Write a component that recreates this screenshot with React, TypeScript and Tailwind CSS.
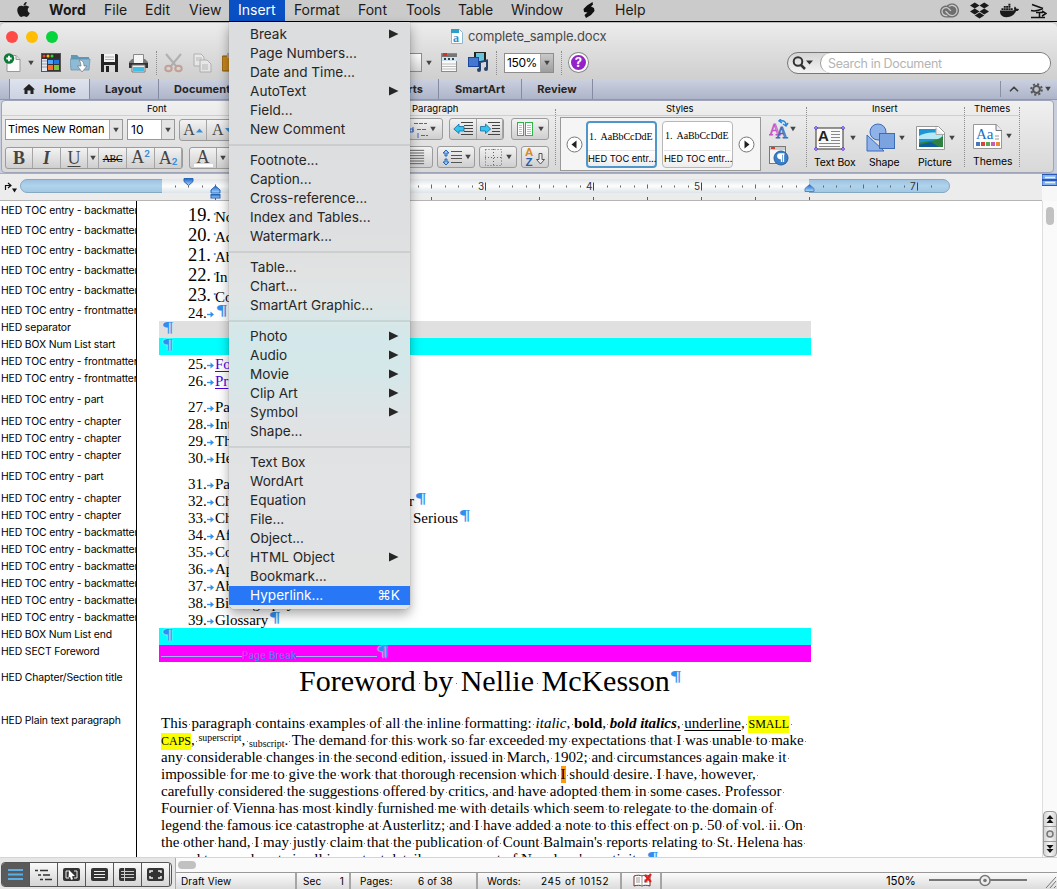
import React from "react";
import { FaApple, FaDropbox, FaDocker } from "react-icons/fa";
import { SiAdobecreativecloud } from "react-icons/si";
import { ChevronUp } from "lucide-react";

const Caret = ({ className = "" }: { className?: string }) => (
  <svg width="7" height="6" viewBox="0 0 7 6" className={`shrink-0 ${className}`}>
    <path d="M0.3 0.5h6.4L3.5 5.5z" fill="#444" />
  </svg>
);

const menuBar = [
  { t: "Word", c: "w-[55px] font-bold tracking-[0.1px]" },
  { t: "File", c: "w-[41px]" },
  { t: "Edit", c: "w-[44px]" },
  { t: "View", c: "w-[40px]" },
  { t: "Insert", c: "w-[56px] bg-[#0850c4] text-white pl-[9px]" },
  { t: "Format", c: "w-[73px] pl-[9px] tracking-[-0.1px]" },
  { t: "Font", c: "w-[48px]" },
  { t: "Tools", c: "w-[52px] tracking-[-0.2px]" },
  { t: "Table", c: "w-[53px] tracking-[-0.2px]" },
  { t: "Window", c: "w-[71px] tracking-[-0.3px]" },
];

function MenuBar() {
  return (
    <div className="flex h-[22px] shrink-0 items-stretch border-b border-black bg-[#cbcbcb] text-[14px] leading-[20px] text-[#1a1a1a]">
      <div className="flex w-[49px] items-start pt-px pl-[15px]">
        <FaApple size={17} />
      </div>
      {menuBar.map((m) => (
        <div key={m.t} className={`shrink-0 ${m.c}`}>{m.t}</div>
      ))}
      <svg width="33" height="21" viewBox="0 0 33 21" className="shrink-0">
        <path d="M10.500 2L5 5.500 1.500 9l.5 3 3.500.5L2.500 15l1.500 3 5-3 3.500-4-.5-3-3-1.500 2-2z" fill="#111" />
      </svg>
      <div className="shrink-0">Help</div>
      <div className="ml-auto flex items-center gap-[11px] pr-[10px]">
        <SiAdobecreativecloud size={19} color="#6e6e6e" />
        <FaDropbox size={19} />
        <FaDocker size={19} />
        <svg width="17" height="17" viewBox="0 0 17 17" fill="none" stroke="#111" strokeWidth="1.500">
          <path d="M2 2.500l11 4M1 8.500c4 1 8 0 12-2M1 15.500h14M6 10.500h7M9.500 10.500v5M12 9l4 2.500-4 2.500" />
        </svg>
      </div>
    </div>
  );
}

function TitleBar() {
  return (
    <div className="flex h-[23px] shrink-0 items-center pl-[6px]">
      <div className="flex gap-[8px]">
        <i className="size-[12px] rounded-full bg-[#ff4a48]" />
        <i className="size-[12px] rounded-full bg-[#ffbd04]" />
        <i className="size-[12px] rounded-full bg-[#07d33c]" />
      </div>
      <svg width="12" height="15" viewBox="0 0 12 15" className="ml-[393px]">
        <path d="M.5 .5h8l3 3v11H.5z" fill="#fff" stroke="#8db7cc" />
        <path d="M0 0h8v4H0z" fill="#2e9fc6" />
        <text x="2" y="13" fontSize="12" fontWeight="bold" fontFamily="Liberation Serif, serif" fill="#2993c9">a</text>
      </svg>
      <span className="ml-[5px] text-[13px] tracking-[-0.12px] text-[#4a4a4a]">complete_sample.docx</span>
    </div>
  );
}

const Dotted = ({ className = "" }: { className?: string }) => (
  <i className={`shrink-0 border-l border-dotted border-[#8d8d8d] ${className}`} />
);

function Toolbar() {
  return (
    <div className="flex h-[32px] shrink-0 items-center border-b border-[#a3a3a3] pb-[2px] pl-[3px]">
      <svg width="20" height="20" viewBox="0 0 20 20">
        <path d="M4 2.500h9l4 4v12H4z" fill="#fbfbfb" stroke="#999" />
        <path d="M13 2.500v4h4" fill="#ddd" stroke="#999" />
        <circle cx="6" cy="5.500" r="5.200" fill="#0b7a37" />
        <path d="M6 2.800v5.400M3.300 5.500h5.400" stroke="#fff" strokeWidth="1.800" />
      </svg>
      <Caret className="ml-[5px] w-[6px]" />
      <svg width="21" height="20" viewBox="0 0 21 20" className="ml-[7px]">
        <rect x=".5" y=".5" width="19" height="18" fill="#333" stroke="#555" />
        <rect x="1" y="1" width="18" height="4" fill="#2f2c2b" />
        <circle cx="3" cy="3" r="1.500" fill="#f33" /><circle cx="7" cy="3" r="1.500" fill="#fb0" /><circle cx="11" cy="3" r="1.500" fill="#2d4" />
        <rect x="1" y="6" width="5" height="12" fill="#e4e8ee" />
        <path d="M1 8h5M1 11h5M1 14h5" stroke="#99a" />
        <rect x="7" y="7" width="5" height="4" fill="#4ba5ff" /><rect x="13" y="7" width="5" height="4" fill="#2774dd" />
        <rect x="7" y="12" width="5" height="5" fill="#ff6c2b" /><rect x="13" y="12" width="5" height="5" fill="#7cc43c" />
      </svg>
      <svg width="21" height="20" viewBox="0 0 21 20" className="ml-[8px]">
        <path d="M1 2h6l2 2h10v12H1z" fill="#5f97b7" />
        <path d="M0 6h20l-1 11H1z" fill="#8ebbd3" stroke="#5e91ae" strokeWidth=".7" />
        <path d="M9 7c4 0 5 3 5 6h3l-5 6-4.500-6H11c0-2-.5-4-2-6z" fill="#fff" stroke="#667" strokeWidth=".6" />
      </svg>
      <svg width="19" height="20" viewBox="0 0 19 20" className="ml-[9px]">
        <path d="M1 1h16l1 1v17H1z" fill="#252525" />
        <rect x="4" y="1" width="11" height="8" fill="#f4f4f4" /><path d="M5 4h9M5 6.500h9" stroke="#aaa" />
        <rect x="4" y="12" width="11" height="7" fill="#d9d9d9" /><rect x="6" y="13" width="3" height="6" fill="#222" />
      </svg>
      <svg width="21" height="20" viewBox="0 0 21 20" className="ml-[9px]">
        <path d="M5.500 1.500h10v9h-10z" fill="#f5f5f5" stroke="#888" />
        <path d="M1 9l3-3h1.500v4h10V6H17l3 3v6H1z" fill="#777" /><path d="M1 10h19v5H1z" fill="#333" />
        <path d="M4 12h13v7H4z" fill="#eee" stroke="#777" /><path d="M5 14h11v4H5z" fill="#3dbfe8" />
      </svg>
      <Dotted className="ml-[7px] h-[24px]" />
      <svg width="20" height="20" viewBox="0 0 20 20" className="ml-[7px] opacity-50">
        <path d="M2 1l10 12M17 1L7 13" stroke="#888" strokeWidth="2" />
        <ellipse cx="4.500" cy="15.500" rx="3.200" ry="2.800" fill="none" stroke="#b56c58" strokeWidth="2" />
        <ellipse cx="14.500" cy="15.500" rx="3.200" ry="2.800" fill="none" stroke="#b56c58" strokeWidth="2" />
      </svg>
      <svg width="19" height="20" viewBox="0 0 19 20" className="ml-[9px] opacity-50">
        <path d="M1 1h7l3 3v9H1z" fill="#f5f5f5" stroke="#888" /><path d="M3 5h6M3 7h6" stroke="#999" />
        <path d="M7 7h7l4 4v8H7z" fill="#f5f5f5" stroke="#888" /><path d="M9 12h6M9 14h6M9 16h6" stroke="#999" />
      </svg>
      <svg width="10" height="20" viewBox="0 0 10 20" className="ml-[10px]">
        <rect y="3" width="10" height="15" rx="1" fill="#c5851c" stroke="#80530f" /><rect x="5" width="5" height="5" fill="#aaa" />
      </svg>
      <i className="ml-[174px] h-[19px] w-[16px] border border-[#8b8b8b] bg-gradient-to-b from-white to-[#d8d8d8]" />
      <Caret className="ml-[4px] w-[6px]" />
      <svg width="17" height="20" viewBox="0 0 17 20" className="ml-[9px]">
        <rect x=".5" y=".5" width="15" height="18" fill="#fafafa" stroke="#8b8b8b" />
        <rect x="1" y="1" width="15" height="3" fill="#777" /><path d="M2 0h4v3H2z" fill="#d4341d" />
        <path d="M1 4h15v4H1z" fill="#cfe2f2" /><path d="M3 6h2M7 6h2M11 6h2" stroke="#344" strokeWidth="2" />
        <path d="M1 11h14M1 13.500h14M1 16h14" stroke="#bbb" />
      </svg>
      <svg width="21" height="21" viewBox="0 0 21 21" className="ml-[10px]">
        <rect x="6" y="0" width="12" height="10" fill="#222" /><rect x="8" y="1" width="8" height="8" fill="#65c5dc" />
        <rect x=".5" y="5.500" width="10" height="9" fill="#4477cf" stroke="#1c469d" />
        <path d="M12 18v-8l7-1.500v8" stroke="#27416d" strokeWidth="2" fill="none" />
        <circle cx="11" cy="18" r="2" fill="#27416d" /><circle cx="18" cy="17" r="2" fill="#27416d" />
      </svg>
      <Dotted className="ml-[7px] h-[24px]" />
      <div className="ml-[7px] flex h-[20px] w-[50px] border border-[#8d8d8d] bg-white text-[12px] leading-[18px] text-black">
        <span className="w-[35px] pl-[2px] tracking-[-0.4px]">150%</span>
        <span className="flex grow items-center justify-center border-l border-[#aaa] bg-gradient-to-b from-[#c9c9c9] to-[#9e9e9e]">
          <Caret className="w-[6px]" />
        </span>
      </div>
      <Dotted className="ml-[7px] h-[24px]" />
      <span className="ml-[7px] flex size-[19px] items-center justify-center rounded-full border-2 border-white bg-[#9323c8] text-[13px] font-bold text-white shadow-[0_0_0_1px_#888]">?</span>
      <div className="mr-[6px] ml-auto flex h-[22px] w-[264px] rounded-full border border-[#777] bg-gradient-to-b from-[#d5d5d5] to-[#f3f3f3]">
        <svg width="32" height="20" viewBox="0 0 32 20">
          <circle cx="10" cy="8.500" r="4.300" fill="none" stroke="#333" strokeWidth="2" />
          <path d="M13 12l4 4" stroke="#333" strokeWidth="2.500" /><path d="M18 7.500h7l-3.500 4z" fill="#333" />
        </svg>
        <div className="grow rounded-full border-l border-[#999] bg-white pl-[7px] text-[12.5px] leading-[21px] tracking-[-0.33px] text-[#b4b4b4]">Search in Document</div>
      </div>
    </div>
  );
}

function Tabs() {
  const base = "shrink-0 border-r border-[#858ba0] leading-[20px]";
  return (
    <div className="flex h-[21px] shrink-0 border-b border-[#8f96b4] bg-gradient-to-b from-[#ccd1df] to-[#aeb5ca] text-[11px] font-bold tracking-[0.1px] text-[#262626]">
      <i className={`w-[10px] ${base}`} />
      <div className={`flex w-[80px] items-center bg-gradient-to-b from-[#dfe3ee] to-[#ccd2e2] pl-[13px] ${base}`}>
        <svg width="12" height="10" viewBox="0 0 12 10"><path d="M6 0l6 5.500h-1.500V10h-3V6.500h-3V10h-3V5.500H0z" fill="#222" /></svg>
        <span className="ml-[9px]">Home</span>
      </div>
      <div className={`w-[69px] pl-[15px] ${base}`}>Layout</div>
      <div className={`w-[171px] pl-[15px] ${base}`}>Document</div>
      <div className={`w-[109px] pr-[15px] text-right ${base}`}>Charts</div>
      <div className={`w-[83px] text-center ${base}`}>SmartArt</div>
      <div className={`w-[71px] text-center ${base}`}>Review</div>
      <div className="my-[2px] ml-auto flex w-[57px] items-center border-l border-[#8a90a3] pl-[6px] text-[#444]">
        <ChevronUp size={14} strokeWidth={3} />
        <svg width="13" height="13" viewBox="0 0 13 13" className="ml-[9px]"><circle cx="6.500" cy="6.500" r="5.300" fill="none" stroke="#555" strokeWidth="2" strokeDasharray="2.080 2.080" /><circle cx="6.500" cy="6.500" r="3.400" fill="none" stroke="#555" strokeWidth="2" /></svg>
        <Caret className="ml-[2px] w-[6px]" />
      </div>
    </div>
  );
}

const Btn = ({ className = "", children }: { className?: string; children?: React.ReactNode }) => (
  <div className={`flex h-[22px] shrink-0 items-center justify-center rounded-[3px] border border-[#9b9b9b] bg-gradient-to-b from-[#f3f3f3] to-[#cfcfcf] ${className}`}>{children}</div>
);
const Cell = ({ className = "", children }: { className?: string; children?: React.ReactNode }) => (
  <span className={`flex h-full shrink-0 items-center justify-center border-r border-[#a5a5a5] ${className}`}>{children}</span>
);
const Lines = ({ w = 18, n = 5, className = "" }: { w?: number; n?: number; className?: string }) => (
  <svg width={w} height={n * 3} viewBox={`0 0 ${w} ${n * 3}`} className={className}>
    {Array.from({ length: n }, (_, i) => <path key={i} d={`M0 ${i * 3 + 1.5}h${w}`} stroke="#555" />)}
  </svg>
);
const Head = ({ className = "", children }: { className?: string; children: React.ReactNode }) => (
  <div className={`h-[14px] border-b border-[#cfcfcf] text-[9.5px] leading-[14px] ${className}`}>{children}</div>
);

const Card = ({ active = false }: { active?: boolean }) => (
  <div className={`flex h-[47px] w-[71px] flex-col rounded-[4px] bg-gradient-to-b from-white from-70% to-[#ececec] whitespace-pre text-black ${active ? "border-2 border-[#4f97cb]" : "border border-[#b8b8b8] px-px"}`}>
    <div className="h-[29px] border-b border-[#e5e5e5] pt-[6px] pl-px font-['Liberation_Serif',serif] text-[10px] leading-[16px] tracking-[-0.1px]">{"1.  AaBbCcDdE"}</div>
    <div className="text-[9.3px] leading-[15px] tracking-[-0.04px]">HED TOC entr...</div>
  </div>
);

const Arrow = ({ left = false }: { left?: boolean }) => (
  <svg width="17" height="17" viewBox="0 0 17 17" className="shrink-0">
    <circle cx="8.500" cy="8.500" r="7.500" fill="#fff" stroke="#777" />
    <path d={left ? "M10.5 4.500v8L5.500 8.500z" : "M6.500 4.500v8l5-4z"} fill="#222" />
  </svg>
);

function Ribbon() {
  const serif = "font-['Liberation_Serif',serif] text-[#444]";
  return (
    <div className="shrink-0 bg-[#c9cedd] pr-[3px] pl-px">
      <div className="flex h-[73px] rounded-[4px] border border-[#9fa5b8] bg-gradient-to-b from-[#f0f0f0] to-[#d8d8d8] pt-px text-black">
        <div className="w-[398px] shrink-0 overflow-hidden">
          <Head className="pl-[145px]">Font</Head>
          <div className="flex pt-[3px] pl-[3px]">
            <div className="flex h-[21px] w-[118px] border border-[#999] bg-white text-[11px] leading-[19px]">
              <span className="w-[99px] shrink-0 pl-[2px] tracking-[-0.05px] whitespace-nowrap">Times New Roman</span>
              <span className="ml-[4px] flex grow items-center justify-center border-l border-[#aaa] bg-[#e4e4e4]"><Caret className="w-[6px]" /></span>
            </div>
            <div className="ml-[4px] flex h-[21px] w-[48px] border border-[#999] bg-white text-[12px] leading-[19px]">
              <span className="w-[33px] pl-[3px]">10</span>
              <span className="flex grow items-center justify-center border-l border-[#aaa] bg-[#e4e4e4]"><Caret className="w-[6px]" /></span>
            </div>
            <Btn className={`ml-[4px] w-[60px] text-[16px] ${serif}`}>
              <Cell className="w-[27px]">A<svg width="7" height="5" className="ml-px"><path d="M0 4.500h7L3.500 .5z" fill="#3a8fd6" /></svg></Cell>
              <Cell className="w-[31px] justify-start border-0 pl-[5px]">A<svg width="7" height="5" className="ml-px"><path d="M0 0h7L3.500 4z" fill="#3a8fd6" /></svg></Cell>
            </Btn>
          </div>
          <div className="flex pt-[6px] pl-[3px]">
            <Btn className={`w-[178px] text-[18px] ${serif}`}>
              <Cell className="w-[27px] font-bold">B</Cell>
              <Cell className="w-[28px] font-bold italic">I</Cell>
              <Cell className="w-[27px] underline underline-offset-2">U</Cell>
              <Cell className="w-[11px]"><Caret className="w-[6px]" /></Cell>
              <Cell className="w-[28px] text-[10px] tracking-[-0.3px] text-black line-through">ABC</Cell>
              <Cell className="w-[28px] pb-px">A<span className="mb-[8px] font-['Inter',sans-serif] text-[9px] font-bold text-[#3a8fd6]">2</span></Cell>
              <Cell className="w-[27px] border-0">A<span className="mt-[8px] font-['Inter',sans-serif] text-[9px] font-bold text-[#3a8fd6]">2</span></Cell>
            </Btn>
            <Btn className={`ml-[6px] w-[60px] text-[18px] ${serif}`}>
              <Cell className="w-[27px]"><span className="h-[18px] border-b-[3px] border-white px-[3px] leading-[16px]">A</span></Cell>
              <Cell className="w-[31px] justify-start border-0 pl-[3px]"><Caret className="w-[6px]" /></Cell>
            </Btn>
          </div>
        </div>
        <div className="w-[155px] shrink-0">
          <Head className="pl-[12px]">Paragraph</Head>
          <div className="flex pt-[2px]">
            <Btn className="w-[43px]">
              <svg width="20" height="17" viewBox="0 0 20 17"><path d="M6 2.500h13M9 8.500h10M13 14.500h7" stroke="#666" strokeDasharray="4 1" /><path d="M1 0v4M5 6v5M2 8h3v3H2zM10 12v5" stroke="#36c" fill="none" /></svg>
              <Caret className="ml-[2px] w-[6px]" />
            </Btn>
            <Btn className="ml-[6px] w-[55px]">
              <Cell className="w-[27px]"><svg width="20" height="14" viewBox="0 0 20 14"><path d="M8 .5h12M11 3.500h9M11 6.500h9M11 9.500h9M8 12.500h12" stroke="#444" /><path d="M6 2v2.500h5v4.500H6v2.500L.8 7z" fill="#35c3f0" stroke="#146c9e" strokeWidth=".8" /></svg></Cell>
              <Cell className="w-[26px] border-0"><svg width="20" height="14" viewBox="0 0 20 14"><path d="M8 .5h12M12 3.500h8M12 6.500h8M12 9.500h8M8 12.500h12" stroke="#444" /><path d="M5.500 2v2.500h-5v4.500h5v2.500L10.700 7z" fill="#35c3f0" stroke="#146c9e" strokeWidth=".8" /></svg></Cell>
            </Btn>
            <Btn className="ml-[7px] w-[38px]">
              <svg width="18" height="16" viewBox="0 0 18 16"><rect x="1.500" y="1.500" width="6" height="13" fill="#fff" stroke="#2db44b" /><rect x="9.500" y="1.500" width="7" height="13" fill="#fff" stroke="#2db44b" /><path d="M3 4.500h3M3 6.500h3M3 8.500h3M3 10.500h3M3 12.500h3M11 4.500h4M11 6.500h4M11 8.500h4M11 10.500h4M11 12.500h4" stroke="#bbb" /></svg>
              <Caret className="ml-[4px] w-[6px]" />
            </Btn>
          </div>
          <div className="flex pt-[6px]">
            <Btn className="w-[33px] pl-px"><Lines n={6} w={16} className="h-[16px]" /></Btn>
            <Btn className="ml-[4px] w-[38px]">
              <svg width="20" height="17" viewBox="0 0 20 17"><path d="M9 2.500h11M9 6.500h11M9 9.500h11M9 13.500h11" stroke="#555" /><path d="M1 4l3-3 3 3H5v3H3V4zM1 13l3 3 3-3H5v-3H3v3z" fill="#8ec7f3" stroke="#2766bd" /></svg>
              <Caret className="ml-[3px] w-[6px]" />
            </Btn>
            <Btn className="ml-[4px] w-[38px]">
              <svg width="17" height="17" viewBox="0 0 17 17"><path d="M.5 .5h16v16H.5zM8.500 0v17M0 8.500h17" fill="none" stroke="#666" strokeDasharray="1 2" /></svg>
              <Caret className="ml-[4px] w-[6px]" />
            </Btn>
            <Btn className="ml-[4px] w-[28px]">
              <svg width="22" height="20" viewBox="0 0 22 20" fontFamily="Liberation Sans, sans-serif" fontWeight="bold" fontSize="11.500"><text x="1" y="9" fill="#d98a1c">A</text><text x="1.500" y="19" fill="#245cae">Z</text><path d="M15 6.500v6h-2.500l4 4.500 4-4.500H18v-6z" fill="#eee" stroke="#555" /></svg>
            </Btn>
          </div>
        </div>
        <Dotted className="my-[7px]" />
        <div className="w-[250px] shrink-0">
          <Head className="pl-[110px]">Styles</Head>
          <div className="flex pt-px pl-[4px]">
            <div className="flex h-[54px] w-[201px] items-center justify-center gap-[5px] border border-[#999] bg-[#f5f5f5]">
              <Arrow left /><div className="ml-[-2px] flex gap-[5px]"><Card active /><Card /></div><Arrow />
            </div>
            <div className="flex flex-col gap-[7px] pt-[2px] pl-[8px]">
              <div className="flex items-center">
                <svg width="20" height="20" viewBox="0 0 20 20" fontFamily="Liberation Serif, serif"><text x="0" y="16" fontSize="16" fill="#fff" stroke="#c457c9">A</text><text x="7" y="19" fontSize="16" fill="#8db8f0" stroke="#466eb4">A</text><path d="M11 2c4-1 6 1 6 4M14 5l3 2 2-3M12 0l-2 2 3 2" fill="none" stroke="#2786df" strokeWidth="1.500" /></svg>
                <Caret className="ml-px w-[6px]" />
              </div>
              <svg width="20" height="20" viewBox="0 0 20 20"><rect x=".5" y=".5" width="16" height="17" fill="#f4f4f4" stroke="#777" /><path d="M1 1h15v3H1z" fill="#ccc" /><path d="M2 1h4v2H2z" fill="#e13b22" /><circle cx="12" cy="12" r="7" fill="#387fc8" stroke="#2860a5" /><path d="M15.500 8H11a2 2 0 000 4.500h1V8M12.500 8v8M14.500 8v8" stroke="#fff" strokeWidth="1.300" fill="#fff" /></svg>
            </div>
          </div>
        </div>
        <Dotted className="my-[5px]" />
        <div className="w-[157px] shrink-0 text-[10.4px] tracking-[-0.1px]">
          <Head className="pl-[65px] tracking-normal">Insert</Head>
          <div className="flex pt-[7px] pl-[7px]">
            <div className="w-[52px]">
              <div className="flex h-[30px] items-center">
                <svg width="32" height="25" viewBox="0 0 32 25"><rect x="2" y="2" width="27" height="21" fill="#f8f8f8" stroke="#333" /><text x="4" y="15" fontSize="15" fontWeight="bold" fontFamily="Liberation Sans, sans-serif" fill="#222">A</text><path d="M17 5.500h9M17 8.500h9M17 11.500h9M17 14.500h9M5 17.500h21M5 20.500h21" stroke="#888" /><g fill="#fff" stroke="#4b1fe0"><circle cx="2" cy="2" r="1.300" /><circle cx="29" cy="2" r="1.300" /><circle cx="2" cy="23" r="1.300" /><circle cx="29" cy="23" r="1.300" /></g></svg>
                <Caret className="ml-[4px] w-[6px]" />
              </div>
              <div className="mt-[3px] leading-[14px] whitespace-nowrap">Text Box</div>
            </div>
            <div className="w-[50px]">
              <div className="flex h-[30px] items-center">
                <svg width="30" height="30" viewBox="0 0 30 30"><g stroke="#3c6bb8" fill="#8fb2e8"><circle cx="12" cy="9" r="8" /><path d="M1 12v16h17z" /><rect x="13.500" y="10.500" width="15" height="15" fill="#7ba3e0" /></g></svg>
                <Caret className="ml-[3px] w-[6px]" />
              </div>
              <div className="mt-[3px] pl-[3px] leading-[14px]">Shape</div>
            </div>
            <div className="w-[46px]">
              <div className="flex h-[30px] items-center">
                <svg width="30" height="25" viewBox="0 0 30 25"><path d="M.5 .5h22l6 6v17H.5z" fill="#fff" stroke="#999" /><path d="M3 3h17l7 6v12H3z" fill="#2194d4" /><path d="M3 10c6-3 13-5 23-2l1 5H3z" fill="#b6e9f6" /><path d="M3 17c7-3 15 0 24-7v11H3z" fill="#2e8241" /><path d="M3 19l12-3 8 5H3z" fill="#0d5c9c" /><path d="M20 1.500v7h8" fill="#eee" stroke="#aaa" /></svg>
                <Caret className="ml-[3px] w-[6px]" />
              </div>
              <div className="mt-[3px] pl-[2px] leading-[14px]">Picture</div>
            </div>
          </div>
        </div>
        <Dotted className="my-[5px]" />
        <div className="w-[54px] shrink-0 text-[10.4px]">
          <Head className="pl-[9px]">Themes</Head>
          <div className="flex h-[26px] items-start pt-[8px] pl-[8px]">
            <svg width="30" height="26" viewBox="0 0 30 26" className="shrink-0"><path d="M.5 .5h23l5 6v18H.5z" fill="#fff" stroke="#999" /><path d="M23 .5v6h6" fill="#eee" stroke="#777" /><text x="3" y="15" fontSize="15" fontFamily="Liberation Serif, serif" fill="#236fc0">Aa</text><path d="M22 12h4M22 15h4" stroke="#999" />{["#4776ba", "#d9443b", "#56a74d", "#c45fb1", "#ec8b2e"].map((c, i) => <rect key={c} x={3 + i * 5} y="18" width="4" height="4" fill={c} />)}</svg>
            <Caret className="mt-[9px] ml-[3px] w-[6px]" />
          </div>
          <div className="mt-[13px] pl-[8px] leading-[14px]">Themes</div>
        </div>
        <Dotted className="my-[5px]" />
      </div>
    </div>
  );
}

function Ruler() {
  const ticks = Array.from({ length: 57 }, (_, i) => i + 1).filter((i) => i !== 48);
  return (
    <div className="flex h-[28px] shrink-0 border-t border-[#a9afbf] bg-[#ececec]">
      <svg width="1042" height="27" viewBox="0 0 1042 27" className="shrink-0" fontFamily="Inter, sans-serif">
        <defs>
          <linearGradient id="rb" x2="0" y2="1"><stop stopColor="#9dc2df" /><stop offset=".5" stopColor="#b1d3ec" /><stop offset="1" stopColor="#a0c7e4" /></linearGradient>
          <linearGradient id="rw" x2="0" y2="1"><stop stopColor="#dfe4e8" /><stop offset=".5" stopColor="#fdfdfd" /><stop offset="1" stopColor="#dde4e9" /></linearGradient>
          <linearGradient id="mk" x2="0" y2="1"><stop stopColor="#1f60c8" /><stop offset="1" stopColor="#a9dcff" /></linearGradient>
        </defs>
        <rect x="20.500" y="5.500" width="929" height="13" rx="6.500" fill="url(#rb)" stroke="#86a9c2" />
        <rect x="162" y="5" width="647" height="14" fill="url(#rw)" />
        {ticks.map((i) => {
          const x = Math.round(162 + i * 13.5) - 0.5;
          if (i % 8 === 0) return <g key={i}><path d={`M${x} 8.500v8`} stroke="#444" /><text x={x - 7.5} y="16" fontSize="10" fill="#333">{i / 8}</text></g>;
          return <path key={i} d={i % 4 === 0 ? `M${x} 10.500v4` : `M${x} 11.500v2`} stroke="#666" />;
        })}
        {Array.from({ length: 12 }, (_, i) => <path key={i} d={`M${215.5 + i * 54} 23v3`} stroke="#4d6277" />)}
        <path d="M0 26.500h1042" stroke="#b5b5b5" />
        <path d="M5.500 16V11.500h5M8 9l3 2.500-3 2.500" stroke="#111" fill="none" strokeWidth="1.200" /><path d="M12 14.500h5l-2.500 4z" fill="#111" />
        <path d="M184 4.500h9v3l-4.500 4-4.500-4z" fill="url(#mk)" stroke="#2864b5" />
        <path d="M211 19v-3l4.500-4 4.500 4v3z" fill="url(#mk)" stroke="#2864b5" /><rect x="211" y="20.500" width="9" height="3.500" fill="url(#mk)" stroke="#2864b5" />
        <path d="M805 17.500v-3l4.500-4 4.500 4v3z" fill="url(#mk)" stroke="#5587bd" />
      </svg>
      <svg width="15" height="27" viewBox="0 0 15 27"><path d="M0 0h15v27H0z" fill="#f7f7f7" /><path d="M0 .5h15v5H0zM0 6.500h15v5H0z" fill="#7fb0f0" stroke="#2959b5" /><path d="M3 3.500h10M3 8.500h10" stroke="#e7f2ff" strokeWidth="1.500" /></svg>
    </div>
  );
}

/* Spaces carry a faint centre dot, as with formatting marks switched on. */
const D = ({ children }: { children: string }) => (
  <>
    {children.split(/( )/).map((p, i) =>
      p === " " ? (
        <span key={i} className="bg-[linear-gradient(#777,#777)] bg-[length:1px_1px] bg-[position:50%_60%] bg-no-repeat"> </span>
      ) : (
        p
      ),
    )}
  </>
);

const Pil = ({ className = "" }: { className?: string }) => (
  <span className={`inline-block w-[11px] origin-left scale-x-[1.45] text-[15px] leading-[13px] text-[#2f8ff0] [-webkit-text-stroke:0.2px_#2f8ff0] ${className}`}>¶</span>
);

const Entry = ({ n, children, tail = false }: { n: number; children?: React.ReactNode; tail?: boolean }) => (
  <div className="flex h-[17px] pl-[29px] text-[15px] leading-[19px]">
    <span className="w-[19px] shrink-0">{n}.</span>
    <svg width="8" height="19" viewBox="0 0 8 19" className="shrink-0"><path d="M0 10.500h5" stroke="#2f8ff0" strokeWidth="1.300" /><path d="M3.500 7.500l3.500 3-3.500 3z" fill="#2f8ff0" /></svg>
    <span className="whitespace-nowrap">{children}</span>
    {tail && <Pil className="ml-[2px]" />}
  </div>
);

const Big = ({ n, children }: { n: number; children: string }) => (
  <div className="flex pl-[29px] leading-[20px]">
    <span className="w-[24px] shrink-0 text-[18.5px] tracking-[-0.1px]">{n}.</span>
    <span className="w-[3px] text-[#2f8ff0]">·</span>
    <span className="pt-[2px] text-[15px]">{children}</span>
  </div>
);

const L = ({ children }: { children: React.ReactNode }) => <div className="h-[17px] leading-[17px] whitespace-pre">{children}</div>;

const bm = "HED TOC entry - backmatter";
const fm = "HED TOC entry - frontmatter";
const ch = "HED TOC entry - chapter";
const pt = "HED TOC entry - part";

type Row = { l: string; h: string; lp: string; cp: string; c: React.ReactNode };
const big = (n: number, t: string): Row => ({ l: bm, h: "h-[20px]", lp: "pt-[3px]", cp: "pt-[4px]", c: <Big n={n}>{t}</Big> });
const row = (l: string, c: React.ReactNode): Row => ({ l, h: "h-[17px]", lp: "", cp: "", c });
const part = (c: React.ReactNode): Row => ({ l: pt, h: "h-[26px]", lp: "pt-[4px]", cp: "pt-[9px]", c });
const Bar = ({ className }: { className: string }) => (
  <div className={`flex h-[17px] w-[652px] pl-[4px] ${className}`}><Pil className="[text-shadow:0_0_1px_#fff,0_0_1px_#fff]" /></div>
);

const rows: Row[] = [
  big(19, "No"), big(20, "Ac"), big(21, "Ab"), big(22, "In"), big(23, "Co"),
  { l: fm, h: "h-[20px]", lp: "pt-[3px]", cp: "pt-[3px]", c: <Entry n={24} tail /> },
  row("HED separator", <Bar className="bg-[#e0e0e0]" />),
  row("HED BOX Num List start", <Bar className="bg-[#00ffff]" />),
  row(fm, <Entry n={25}><span className="text-[#4a00e0] underline underline-offset-2">Fo</span></Entry>),
  row(fm, <Entry n={26}><span className="text-[#4a00e0] underline underline-offset-2">Pr</span></Entry>),
  part(<Entry n={27}>Pa</Entry>),
  row(ch, <Entry n={28}>Int</Entry>),
  row(ch, <Entry n={29}>Th</Entry>),
  row(ch, <Entry n={30}>He</Entry>),
  part(<Entry n={31}>Pa</Entry>),
  row(ch, <Entry n={32} tail><span className="flex w-[199px] justify-between"><span>Ch</span><span>r</span></span></Entry>),
  row(ch, <Entry n={33} tail><span className="flex w-[243px] justify-between"><span>Ch</span><span>Serious</span></span></Entry>),
  row(bm, <Entry n={34}>Af</Entry>),
  row(bm, <Entry n={35}>Co</Entry>),
  row(bm, <Entry n={36}>Ap</Entry>),
  row(bm, <Entry n={37}>Ab</Entry>),
  row(bm, <Entry n={38}>Bibliography</Entry>),
  row(bm, <Entry n={39} tail>Glossary</Entry>),
  row("HED BOX Num List end", <Bar className="bg-[#00ffff]" />),
  row("HED SECT Foreword", (
    <div className="flex h-[17px] w-[652px] bg-[#ff00ff] pl-[2px] font-['Inter',sans-serif] text-[10px] leading-[20px] text-[#4f86ef]">
      <i className="mt-[11px] h-px w-[81px] bg-[#9fb4ff]" />
      <span className="tracking-[0.05px]">Page Break</span>
      <i className="mt-[11px] h-px w-[81px] bg-[#9fb4ff]" />
      <Pil className="ml-px font-['Liberation_Serif',serif] [text-shadow:0_0_1px_#fff,0_0_1px_#fff]" />
    </div>
  )),
  { l: "HED Chapter/Section title", h: "h-[53px]", lp: "pt-[9px]", cp: "", c: (
    <div className="flex pl-[140px] text-[30px] leading-[37px] whitespace-pre"><span><D>Foreword by Nellie McKesson</D></span><Pil className="mt-[8px] ml-px" /></div>
  ) },
  { l: "HED Plain text paragraph", h: "h-[142px]", lp: "-mt-px", cp: "", c: (
    <div className="pl-[2px] text-[15px]">
      <L><D>This paragraph contains examples of all the inline formatting: </D><i>italic</i><D>, </D><b>bold</b><D>, </D><b><i>bold italics</i></b><D>, </D><u className="underline-offset-2">underline</u><D>, </D><span className="inline-block h-[17px] bg-[#faff00] text-[12px]">SMALL</span><D>{" "}</D></L>
      <L><span className="inline-block h-[17px] bg-[#faff00] text-[12px]">CAPS</span><D>, </D><span className="relative top-[-4px] text-[9.8px]">superscript</span><D>, </D><span className="relative top-[2px] text-[9.8px]">subscript</span><D>. The demand for this work so far exceeded my expectations that I was unable to make </D></L>
      <L><D>any considerable changes in the second edition, issued in March, 1902; and circumstances again make it </D></L>
      <L><D>impossible for me to give the work that thorough recension which </D><b className="inline-block h-[17px] bg-[#ff9a0c] font-normal">I</b><D> should desire. I have, however, </D></L>
      <L><D>carefully considered the suggestions offered by critics, and have adopted them in some cases. Professor </D></L>
      <L><D>Fournier of Vienna has most kindly furnished me with details which seem to relegate to the domain of </D></L>
      <L><D>legend the famous ice catastrophe at Austerlitz; and I have added a note to this effect on p. 50 of vol. ii. On </D></L>
      <L><D>the other hand, I may justly claim that the publication of Count Balmain's reports relating to St. Helena has </D></L>
      <L><D>served to corroborate in all important details my account of Napoleon's captivity.</D><Pil className="relative top-[-2px] ml-px" /></L>
    </div>
  ) },
];

function DocumentArea() {
  return (
    <div className="flex h-[656px] shrink-0 overflow-hidden bg-white">
      <div className="h-full w-[1042px] shrink-0 overflow-hidden text-black">
        <div className="flex flex-col">
          {rows.map((r, i) => (
            <div key={i} className={`flex ${r.h}`}>
              <div className={`w-[137px] shrink-0 overflow-hidden border-r border-black pl-px text-[10.4px] leading-[13px] tracking-[-0.13px] whitespace-nowrap ${r.lp}`}>{r.l}</div>
              <div className={`ml-[22px] font-['Liberation_Serif',serif] ${r.cp}`}>{r.c}</div>
            </div>
          ))}
        </div>
      </div>
      <div className="flex w-[15px] flex-col items-center border-l border-[#dedede] bg-[#fafafa]">
        <i className="mt-[6px] h-[18px] w-[8px] rounded-full bg-[#c1c1c1]" />
        <div className="mt-auto flex h-[46px] w-full flex-col items-center rounded-[4px] border border-[#999] bg-gradient-to-r from-[#d5d5d5] via-[#f4f4f4] to-[#d5d5d5]">
          <svg width="12" height="44" viewBox="0 0 12 44"><path d="M6 3l3.500 4h-7zM6 7l3.500 4h-7zM6 41l3.500-4h-7zM6 37l3.500-4h-7z" fill="#111" /><path d="M0 14.500h12M0 29.500h12" stroke="#999" /><circle cx="6" cy="22" r="3" fill="#ddd" stroke="#777" strokeWidth="1.500" /></svg>
        </div>
      </div>
    </div>
  );
}

function StatusBar() {
  const v = "flex w-[28px] shrink-0 items-center justify-center border-r border-[#555]";
  const c = "shrink-0 border-r-2 border-[#a5a5a5]";
  return (
    <div className="flex h-[32px] shrink-0 border-t border-[#d5d5d5] bg-[#e6e6e6] text-[10px] text-black">
      <div className="flex w-[176px] shrink-0 border-r border-[#aaa] pt-[4px] pl-px">
        <div className="flex h-[25px] w-[171px] overflow-hidden rounded-[4px] border border-[#555] bg-gradient-to-b from-[#fafafa] to-[#d5d5d5]">
          <span className={`${v} bg-[#5a5a5a]`}><svg width="15" height="11"><path d="M0 1h15M0 5.500h15M0 10h15" stroke="#5aaee8" strokeWidth="2" /></svg></span>
          <span className={v}><svg width="17" height="12"><path d="M0 1.500h3M5 1.500h8M3 6h3M8 6h7M5 10.500h3M10 10.500h7" stroke="#333" strokeWidth="1.500" /></svg></span>
          <span className={v}><svg width="17" height="13"><rect width="17" height="13" rx="2" fill="#333" /><path d="M6 3H3v7h3M11 3h3v7h-3" stroke="#eee" fill="none" /><path d="M6 2l6 6-3 .3 1 3-2 .5-1-3-1.500 1z" fill="#fff" /></svg></span>
          <span className={v}><svg width="17" height="13"><rect width="17" height="13" rx="2" fill="#333" /><path d="M3 3.500h11M3 6.500h11M3 9.500h11" stroke="#eee" /></svg></span>
          <span className={v}><svg width="17" height="13"><rect width="17" height="13" rx="2" fill="#333" /><path d="M5.500 0v13M2 3.500h13M2 6.500h13M2 9.500h13" stroke="#ccc" /></svg></span>
          <span className={`${v} border-0`}><svg width="17" height="13"><rect width="17" height="13" rx="2" fill="#333" /><path d="M6 3H3v2M11 3h3v2M6 10H3V8M11 10h3V8" stroke="#eee" strokeWidth="1.500" fill="none" /></svg></span>
        </div>
      </div>
      <div className="flex grow flex-col">
        <div className="flex h-[15px] items-start border-b border-[#999] bg-[#fafafa] pt-[3px] pl-[2px]"><i className="h-[8px] w-[18px] rounded-full bg-[#c1c1c1]" /></div>
        <div className="flex h-[16px] bg-gradient-to-b from-[#fbfbfb] to-[#dcdcdc] leading-[16px] tracking-[0.1px]">
          <div className={`w-[121px] pl-[5px] ${c}`}>Draft View</div>
          <div className={`flex w-[54px] justify-between pr-[5px] pl-[6px] ${c}`}><span>Sec</span><span>1</span></div>
          <div className={`flex w-[127px] pl-[9px] ${c}`}><span className="w-[58px]">Pages:</span><span>6 of 38</span></div>
          <div className={`flex w-[144px] pl-[9px] ${c}`}><span className="w-[54px]">Words:</span><span className="tracking-[0.65px]">245 of 10152</span></div>
          <div className={`w-[40px] pl-[11px] ${c}`}>
            <svg width="22" height="16" viewBox="0 0 22 16"><path d="M1 3c3-1 6-1 8 0 2-1 5-1 8 0v10c-3-1-6-1-8 0-2-1-5-1-8 0z" fill="#fff" stroke="#6d3527" /><path d="M9 3v10M3 5h4M3 7h4M3 9h4M11 7h4M11 9h4" stroke="#999" /><path d="M12 2l6 7M18 1l-6 8" stroke="#e02020" strokeWidth="2.200" /></svg>
          </div>
          <div className="flex grow items-center pl-[224px] text-[11.5px]">
            <span className="w-[43px] tracking-[-0.1px]">150%</span>
            <svg width="128" height="16" viewBox="0 0 128 16"><path d="M0 7h98" stroke="#777" strokeWidth="2" /><circle cx="56" cy="7.500" r="5" fill="#eee" stroke="#777" strokeWidth="1.500" /><circle cx="56" cy="7.500" r="1.800" fill="#777" /><path d="M117 15l10-11M121 15l6-7M125 15l2-2" stroke="#777" /></svg>
          </div>
        </div>
      </div>
    </div>
  );
}

const groups: string[][] = [
  ["Break>", "Page Numbers...", "Date and Time...", "AutoText>", "Field...", "New Comment"],
  ["Footnote...", "Caption...", "Cross-reference...", "Index and Tables...", "Watermark..."],
  ["Table...", "Chart...", "SmartArt Graphic..."],
  ["Photo>", "Audio>", "Movie>", "Clip Art>", "Symbol>", "Shape..."],
  ["Text Box", "WordArt", "Equation", "File...", "Object...", "HTML Object>", "Bookmark...", "Hyperlink..."],
];

function InsertMenu() {
  return (
    <div className="absolute top-[22px] left-[229px] h-[587px] w-[181px] rounded-b-[5px] bg-[linear-gradient(#dcddde,#dedfe0_35%,#e1e4e4_46%,#d3e8ea_54%,#d5e7e9_60%,#e0e3e5_68%,#e2e2e2)] pt-[3px] text-[13.6px] text-[#262626] shadow-[0_5px_12px_rgba(0,0,0,0.35),0_0_1px_rgba(0,0,0,0.5)]">
      {groups.map((g, gi) => (
        <React.Fragment key={gi}>
          {gi > 0 && <div className="flex h-[12px] items-center"><i className="h-[2px] w-full bg-[#00000014]" /></div>}
          {g.map((t) => {
            const sub = t.endsWith(">");
            const hot = t === "Hyperlink...";
            return (
              <div key={t} className={`flex h-[19px] items-center justify-between pr-[10px] pb-px pl-[21px] leading-[18px] ${hot ? "bg-[#2777f6] text-white" : ""}`}>
                <span>{sub ? t.slice(0, -1) : t}</span>
                {sub && <svg width="12" height="10" viewBox="0 0 12 10"><path d="M1 .5l9.500 4.500L1 9.500z" fill="#262626" /></svg>}
                {hot && <span>⌘K</span>}
              </div>
            );
          })}
        </React.Fragment>
      ))}
    </div>
  );
}

export default function App() {
  return (
    <div className="relative flex h-[889px] w-[1057px] flex-col overflow-hidden bg-[#d9d9d9] font-['Inter',sans-serif]">
      <MenuBar />
      <div className="flex h-[57px] shrink-0 flex-col rounded-t-[5px] border-t border-[#b9b9b9] bg-gradient-to-b from-[#ececec] to-[#cfcfcf] pt-[2px]">
        <TitleBar />
        <Toolbar />
      </div>
      <Tabs />
      <Ribbon />
      <Ruler />
      <DocumentArea />
      <StatusBar />
      <InsertMenu />
    </div>
  );
}
